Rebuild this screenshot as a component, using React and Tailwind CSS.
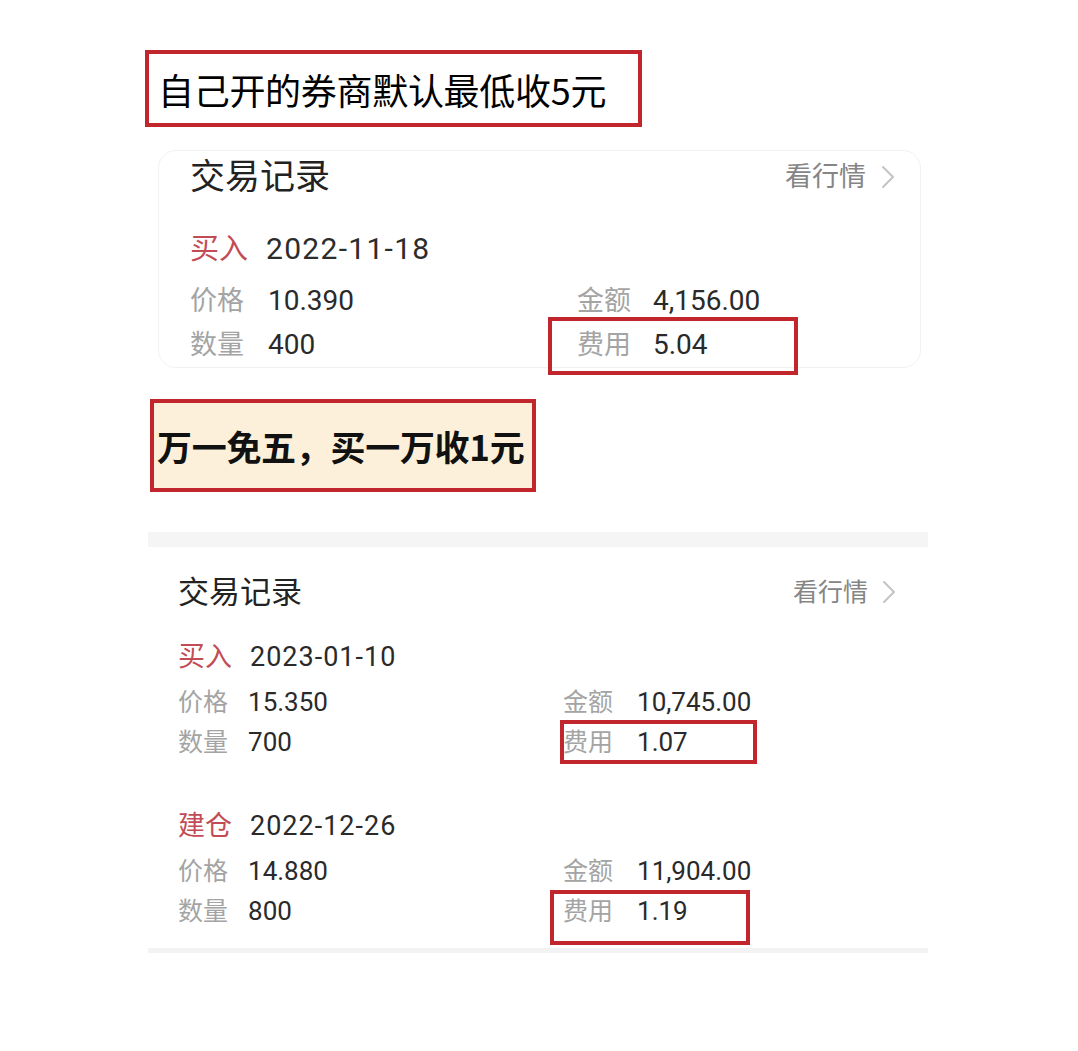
import React from "react";

const FONT = "font-[family-name:Roboto,'Noto_Sans_CJK_SC',sans-serif]";
const CJK = "font-[family-name:'Noto_Sans_CJK_SC',sans-serif]";

function Chevron({ h = 24 }) {
  return (
    <svg width="14" height={h} viewBox="0 0 14 24" fill="none">
      <polyline points="2,2 12,12 2,22" stroke="#c4c4c4" strokeWidth="2" strokeLinejoin="round" strokeLinecap="round" />
    </svg>
  );
}

export default function App() {
  return (
    <div className={`w-[1078px] h-[1051px] bg-white flex flex-col ${FONT}`}>
      {/* Annotation 1 */}
      <div className={`ml-[145px] mt-[50px] w-[497px] h-[77px] border-[4px] border-[#c1262d] flex items-center pl-[9px] ${CJK}`}>
        <span className="text-[36px] leading-none font-normal text-[#000] tracking-[-0.3px]">自己开的券商默认最低收5元</span>
      </div>

      {/* Card 1 */}
      <div className="relative ml-[158px] mt-[23px] w-[763px] rounded-[18px] border border-[#f2f2f2] pl-[31px] pr-[25px]">
        <div className="h-[52px] flex items-center justify-between">
          <span className="text-[35px] leading-none text-[#222]">交易记录</span>
          <div className="flex items-center gap-[15px]">
            <span className="text-[27px] leading-none text-[#858585]">看行情</span>
            <Chevron />
          </div>
        </div>
        <div className="mt-[22px] h-[48px] flex items-center gap-[18px]">
          <span className="text-[29px] leading-none text-[#c24c56]">买入</span>
          <span className="text-[30px] leading-none text-[#2c2c2c] tracking-[1.3px]">2022-11-18</span>
        </div>
        <div className="mt-[6px] grid grid-cols-[387px_1fr]">
          <div className="h-[44px] flex items-center gap-[24px]">
            <span className="text-[27px] leading-none text-[#a4a4a4]">价格</span>
            <span className="text-[28px] leading-none text-[#2a2a2a]">10.390</span>
          </div>
          <div className="h-[44px] flex items-center gap-[22px]">
            <span className="text-[27px] leading-none text-[#a4a4a4]">金额</span>
            <span className="text-[28px] leading-none text-[#2a2a2a]">4,156.00</span>
          </div>
          <div className="h-[44px] flex items-center gap-[24px]">
            <span className="text-[27px] leading-none text-[#a4a4a4]">数量</span>
            <span className="text-[28px] leading-none text-[#2a2a2a]">400</span>
          </div>
          <div className="h-[44px] flex items-center gap-[22px]">
            <span className="text-[27px] leading-none text-[#a4a4a4]">费用</span>
            <span className="text-[28px] leading-none text-[#2a2a2a]">5.04</span>
          </div>
        </div>
        <div className="absolute left-[389px] top-[166px] w-[250px] h-[58px] border-[4px] border-[#c1262d]" />
      </div>

      {/* Annotation 2 */}
      <div className={`ml-[150px] mt-[31px] w-[386px] h-[93px] border-[4px] border-[#c1262d] bg-[#fdf0da] flex items-center pl-[3px] ${CJK}`}>
        <span className="text-[35px] leading-none font-bold text-[#111] tracking-[-0.3px]">万一免五，买一万收1元</span>
      </div>

      {/* Card 2 */}
      <div className="relative ml-[148px] mt-[40px] w-[780px] flex flex-col">
        <div className="h-[15px] bg-[#f5f5f5]" />
        <div className="pl-[30px] pr-[32px]">
          <div className="mt-[25px] h-[40px] flex items-center justify-between">
            <span className="text-[31px] leading-none text-[#222]">交易记录</span>
            <div className="flex items-center gap-[14px]">
              <span className="text-[25px] leading-none text-[#858585]">看行情</span>
              <Chevron />
            </div>
          </div>

          <div className="mt-[25px] h-[40px] flex items-center gap-[18px]">
            <span className="text-[27px] leading-none text-[#c24c56]">买入</span>
            <span className="text-[27px] leading-none text-[#2a2a2a] tracking-[1px]">2023-01-10</span>
          </div>
          <div className="mt-[5px] grid grid-cols-[385px_1fr]">
            <div className="h-[40px] flex items-center gap-[20px]">
              <span className="text-[25px] leading-none text-[#a4a4a4]">价格</span>
              <span className="text-[26px] leading-none text-[#2a2a2a]">15.350</span>
            </div>
            <div className="h-[40px] flex items-center gap-[24px]">
              <span className="text-[25px] leading-none text-[#a4a4a4]">金额</span>
              <span className="text-[26px] leading-none text-[#2a2a2a]">10,745.00</span>
            </div>
            <div className="h-[40px] flex items-center gap-[20px]">
              <span className="text-[25px] leading-none text-[#a4a4a4]">数量</span>
              <span className="text-[26px] leading-none text-[#2a2a2a]">700</span>
            </div>
            <div className="h-[40px] flex items-center gap-[24px]">
              <span className="text-[25px] leading-none text-[#a4a4a4]">费用</span>
              <span className="text-[26px] leading-none text-[#2a2a2a]">1.07</span>
            </div>
          </div>

          <div className="mt-[44px] h-[40px] flex items-center gap-[18px]">
            <span className="text-[27px] leading-none text-[#c24c56]">建仓</span>
            <span className="text-[27px] leading-none text-[#2a2a2a] tracking-[1px]">2022-12-26</span>
          </div>
          <div className="mt-[5px] grid grid-cols-[385px_1fr]">
            <div className="h-[40px] flex items-center gap-[20px]">
              <span className="text-[25px] leading-none text-[#a4a4a4]">价格</span>
              <span className="text-[26px] leading-none text-[#2a2a2a]">14.880</span>
            </div>
            <div className="h-[40px] flex items-center gap-[24px]">
              <span className="text-[25px] leading-none text-[#a4a4a4]">金额</span>
              <span className="text-[26px] leading-none text-[#2a2a2a]">11,904.00</span>
            </div>
            <div className="h-[40px] flex items-center gap-[20px]">
              <span className="text-[25px] leading-none text-[#a4a4a4]">数量</span>
              <span className="text-[26px] leading-none text-[#2a2a2a]">800</span>
            </div>
            <div className="h-[40px] flex items-center gap-[24px]">
              <span className="text-[25px] leading-none text-[#a4a4a4]">费用</span>
              <span className="text-[26px] leading-none text-[#2a2a2a]">1.19</span>
            </div>
          </div>
        </div>
        <div className="mt-[17px] h-[5px] bg-[#f3f3f3]" />
        <div className="absolute left-[412px] top-[188px] w-[197px] h-[44px] border-[4px] border-[#c1262d]" />
        <div className="absolute left-[402px] top-[358px] w-[200px] h-[55px] border-[4px] border-[#c1262d]" />
      </div>
    </div>
  );
}
